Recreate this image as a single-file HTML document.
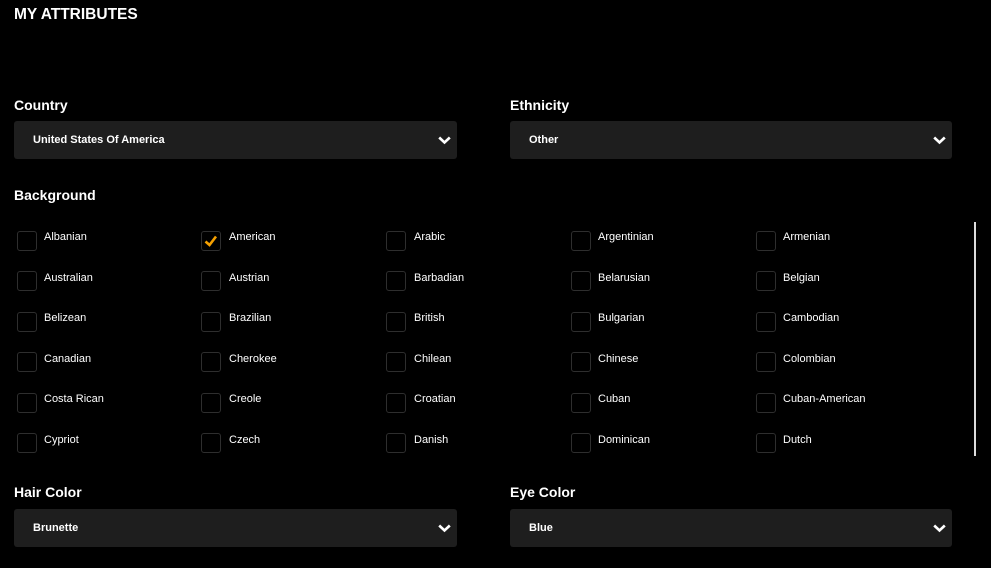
<!DOCTYPE html>
<html><head><style>
*{margin:0;padding:0;box-sizing:border-box}
body{width:991px;height:568px;background:#000;color:#fff;font-family:"Liberation Sans",Arial,sans-serif;position:relative;overflow:hidden}
.a{position:absolute}
.t{left:14px;top:5px;font-size:15.5px;font-weight:bold;line-height:20px}
.lbl{font-size:14px;font-weight:bold;line-height:16px}
.sel{height:38px;background:#1e1e1e;border-radius:3px;font-size:11px;font-weight:bold;line-height:38px;padding-left:19px}
.sel svg{position:absolute;right:6px;top:15px}
.cb{width:20px;height:20px;border:1px solid #2e2e2e;border-radius:3px}
.cl{font-size:11px;line-height:13px}
.sb{left:974px;top:222px;width:2px;height:234px;background:#ddd}
</style></head><body>
<div class="a t">MY ATTRIBUTES</div>
<div class="a lbl" style="left:14px;top:97px">Country</div>
<div class="a lbl" style="left:510px;top:97px">Ethnicity</div>
<div class="a sel" style="left:14px;top:121px;width:443px">United States Of America<svg width="13" height="9" viewBox="0 0 13 9"><path d="M1.2 1.5L6.5 6.5L11.8 1.5" stroke="#fff" stroke-width="2.6" fill="none"/></svg></div>
<div class="a sel" style="left:510px;top:121px;width:442px">Other<svg width="13" height="9" viewBox="0 0 13 9"><path d="M1.2 1.5L6.5 6.5L11.8 1.5" stroke="#fff" stroke-width="2.6" fill="none"/></svg></div>
<div class="a lbl" style="left:14px;top:187px">Background</div>
<div class="a sb"></div>
<div class="a lbl" style="left:14px;top:484px">Hair Color</div>
<div class="a lbl" style="left:510px;top:484px">Eye Color</div>
<div class="a sel" style="left:14px;top:509px;width:443px">Brunette<svg width="13" height="9" viewBox="0 0 13 9"><path d="M1.2 1.5L6.5 6.5L11.8 1.5" stroke="#fff" stroke-width="2.6" fill="none"/></svg></div>
<div class="a sel" style="left:510px;top:509px;width:442px">Blue<svg width="13" height="9" viewBox="0 0 13 9"><path d="M1.2 1.5L6.5 6.5L11.8 1.5" stroke="#fff" stroke-width="2.6" fill="none"/></svg></div>

<div class="a cb" style="left:17px;top:231px"></div><div class="a cl" style="left:44px;top:231px">Albanian</div>
<div class="a cb" style="left:201px;top:231px"><svg width="18" height="18" viewBox="0 0 18 18"><path d="M3.5 9.5L7.5 13L14 4.5" stroke="#f5a000" stroke-width="2.6" fill="none"/></svg></div><div class="a cl" style="left:229px;top:231px">American</div>
<div class="a cb" style="left:386px;top:231px"></div><div class="a cl" style="left:414px;top:231px">Arabic</div>
<div class="a cb" style="left:571px;top:231px"></div><div class="a cl" style="left:598px;top:231px">Argentinian</div>
<div class="a cb" style="left:756px;top:231px"></div><div class="a cl" style="left:783px;top:231px">Armenian</div>

<div class="a cb" style="left:17px;top:271px"></div><div class="a cl" style="left:44px;top:272px">Australian</div>
<div class="a cb" style="left:201px;top:271px"></div><div class="a cl" style="left:229px;top:272px">Austrian</div>
<div class="a cb" style="left:386px;top:271px"></div><div class="a cl" style="left:414px;top:272px">Barbadian</div>
<div class="a cb" style="left:571px;top:271px"></div><div class="a cl" style="left:598px;top:272px">Belarusian</div>
<div class="a cb" style="left:756px;top:271px"></div><div class="a cl" style="left:783px;top:272px">Belgian</div>

<div class="a cb" style="left:17px;top:312px"></div><div class="a cl" style="left:44px;top:312px">Belizean</div>
<div class="a cb" style="left:201px;top:312px"></div><div class="a cl" style="left:229px;top:312px">Brazilian</div>
<div class="a cb" style="left:386px;top:312px"></div><div class="a cl" style="left:414px;top:312px">British</div>
<div class="a cb" style="left:571px;top:312px"></div><div class="a cl" style="left:598px;top:312px">Bulgarian</div>
<div class="a cb" style="left:756px;top:312px"></div><div class="a cl" style="left:783px;top:312px">Cambodian</div>

<div class="a cb" style="left:17px;top:352px"></div><div class="a cl" style="left:44px;top:353px">Canadian</div>
<div class="a cb" style="left:201px;top:352px"></div><div class="a cl" style="left:229px;top:353px">Cherokee</div>
<div class="a cb" style="left:386px;top:352px"></div><div class="a cl" style="left:414px;top:353px">Chilean</div>
<div class="a cb" style="left:571px;top:352px"></div><div class="a cl" style="left:598px;top:353px">Chinese</div>
<div class="a cb" style="left:756px;top:352px"></div><div class="a cl" style="left:783px;top:353px">Colombian</div>

<div class="a cb" style="left:17px;top:393px"></div><div class="a cl" style="left:44px;top:393px">Costa Rican</div>
<div class="a cb" style="left:201px;top:393px"></div><div class="a cl" style="left:229px;top:393px">Creole</div>
<div class="a cb" style="left:386px;top:393px"></div><div class="a cl" style="left:414px;top:393px">Croatian</div>
<div class="a cb" style="left:571px;top:393px"></div><div class="a cl" style="left:598px;top:393px">Cuban</div>
<div class="a cb" style="left:756px;top:393px"></div><div class="a cl" style="left:783px;top:393px">Cuban-American</div>

<div class="a cb" style="left:17px;top:433px"></div><div class="a cl" style="left:44px;top:434px">Cypriot</div>
<div class="a cb" style="left:201px;top:433px"></div><div class="a cl" style="left:229px;top:434px">Czech</div>
<div class="a cb" style="left:386px;top:433px"></div><div class="a cl" style="left:414px;top:434px">Danish</div>
<div class="a cb" style="left:571px;top:433px"></div><div class="a cl" style="left:598px;top:434px">Dominican</div>
<div class="a cb" style="left:756px;top:433px"></div><div class="a cl" style="left:783px;top:434px">Dutch</div>
</body></html>
